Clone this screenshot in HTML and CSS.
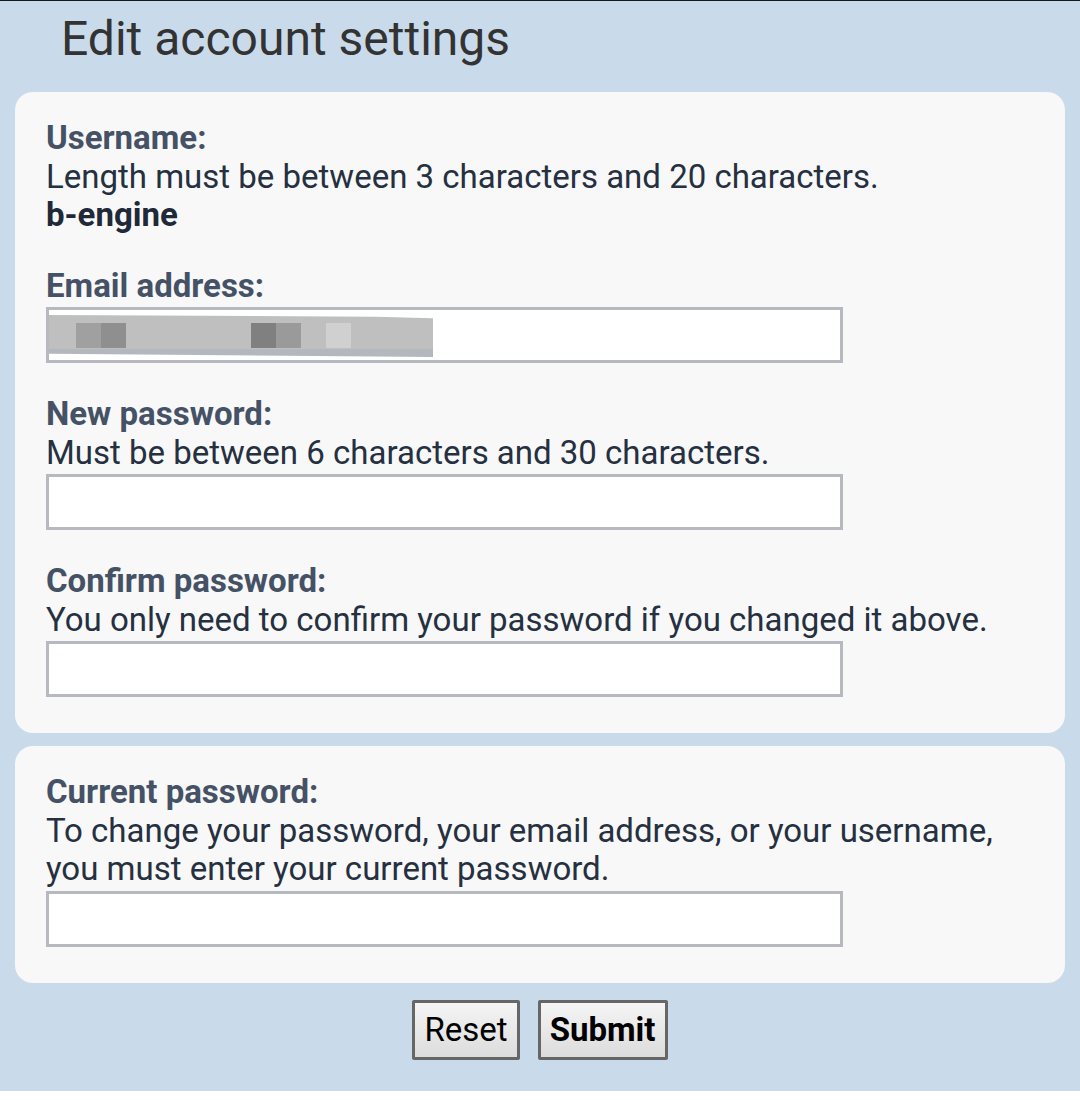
FILE: index.html
```html
<!DOCTYPE html>
<html lang="en">
<head>
<meta charset="utf-8">
<title>Edit account settings</title>
<link rel="stylesheet" href="styles.css">
</head>
<body>
<div class="page">
  <h1 class="title">Edit account settings</h1>
  <form class="form">
    <section class="card">
      <div class="field">
        <div class="label">Username:</div>
        <div class="hint">Length must be between 3 characters and 20 characters.</div>
        <div class="value">b-engine</div>
      </div>
      <div class="field">
        <div class="label">Email address:</div>
        <div class="input-box">
          <div class="redact">
            <span class="sq s1"></span><span class="sq s2"></span>
            <span class="gap1"></span>
            <span class="sq s3"></span><span class="sq s4"></span>
            <span class="gap2"></span>
            <span class="sq s5"></span>
          </div>
        </div>
      </div>
      <div class="field">
        <div class="label">New password:</div>
        <div class="hint">Must be between 6 characters and 30 characters.</div>
        <input class="input" type="password">
      </div>
      <div class="field">
        <div class="label">Confirm password:</div>
        <div class="hint">You only need to confirm your password if you changed it above.</div>
        <input class="input" type="password">
      </div>
    </section>
    <section class="card">
      <div class="field">
        <div class="label">Current password:</div>
        <div class="hint">To change your password, your email address, or your username,<br>you must enter your current password.</div>
        <input class="input" type="password">
      </div>
    </section>
    <div class="actions">
      <button type="reset" class="btn">Reset</button>
      <button type="submit" class="btn btn-primary">Submit</button>
    </div>
  </form>
</div>
</body>
</html>
```
FILE: styles.css
```css
html, body {
  margin: 0;
  padding: 0;
  background: #ffffff;
}
body {
  font-family: Roboto, "Noto Sans", sans-serif;
}
.page {
  background: #c9dbea;
  border-top: 1px solid #1a1a1a;
  padding-bottom: 31px;
}
.title {
  margin: 0;
  padding: 10px 0 0 61px;
  height: 91px;
  box-sizing: border-box;
  font-size: 48px;
  font-weight: 400;
  line-height: 56px;
  color: #333333;
}
.form {
  padding: 0 15px;
}
.card {
  background: #f8f8f8;
  border-radius: 18px;
  padding: 27px 31px 36px;
  margin-bottom: 13px;
}
.field + .field {
  margin-top: 32px;
}
.label,
.hint,
.value {
  font-size: 33px;
  line-height: 38.5px;
}
.label {
  font-weight: 700;
  color: #455266;
}
.hint {
  color: #253041;
}
.value {
  font-weight: 700;
  color: #1f2937;
}
.input,
.input-box {
  display: block;
  box-sizing: border-box;
  width: 797px;
  height: 56px;
  margin: 2px 0 0;
  border: 3px solid #b6b9bf;
  background: #ffffff;
  font-size: 30px;
  padding: 0 6px;
}
.input-box {
  padding: 5px 0 0 0;
}
.redact {
  display: flex;
  align-items: flex-start;
  width: 384px;
  height: 42px;
  box-sizing: border-box;
  padding: 8px 0 0 27px;
  background: linear-gradient(to bottom, #bfbfbf 0, #bfbfbf 34px, #b3b8be 34px, #b3b8be 42px);
  clip-path: polygon(0 0, 85% 4%, 100% 8%, 100% 100%, 0 92%);
}
.sq {
  display: block;
  width: 25px;
  height: 25px;
}
.s1 { background: #a0a0a0; }
.s2 { background: #8f8f8f; }
.s3 { background: #808080; }
.s4 { background: #9a9a9a; }
.s5 { background: #d0d0d0; }
.gap1 { width: 125px; }
.gap2 { width: 25px; }
.actions {
  display: flex;
  justify-content: center;
  gap: 18px;
  padding-top: 4px;
}
.btn {
  height: 60px;
  padding: 0 9px;
  border: 3px solid #666666;
  border-radius: 2px;
  background: linear-gradient(to bottom, #f5f5f5, #dcdcdc);
  font-family: Roboto, "Noto Sans", sans-serif;
  font-size: 33px;
  color: #000000;
}
.btn-primary {
  font-weight: 700;
}
```
